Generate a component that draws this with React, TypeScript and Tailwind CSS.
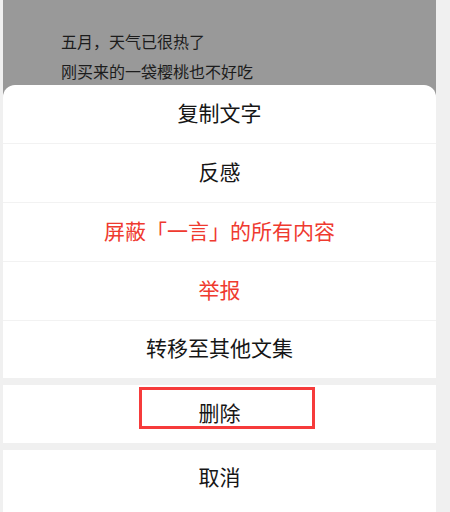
import React from "react";

const font = { fontFamily: '"Noto Sans CJK SC", "Noto Sans", sans-serif' };

function Row({ label, red, divider, h = "h-[58px]" }: { label: string; red?: boolean; divider?: boolean; h?: string }) {
  return (
    <div
      className={`${h} flex items-center justify-center pb-[3px] text-[21px] ${red ? "text-[#ef3a2f]" : "text-[#161616]"} ${divider ? "border-b border-[#f2f2f2]" : ""}`}
    >
      {label}
    </div>
  );
}

export default function App() {
  return (
    <div className="w-[450px] h-[512px] bg-[#f0f0f0] flex overflow-hidden" style={font}>
      <div className="ml-[3px] w-[433px] flex flex-col relative">
        <div className="h-[85px] shrink-0 bg-[#999999] pt-[26px] pl-[58px] overflow-hidden text-[16px] leading-[30px] text-[#1c1c1c]">
          <p>五月，天气已很热了</p>
          <p>刚买来的一袋樱桃也不好吃</p>
        </div>
        <div className="bg-[#999999] flex-1 flex flex-col">
          <div className="bg-white rounded-t-[12px]">
            <Row label="复制文字" divider h="h-[59px]" />
            <Row label="反感" divider h="h-[59px]" />
            <Row label="屏蔽「一言」的所有内容" red divider h="h-[59px]" />
            <Row label="举报" red divider h="h-[59px]" />
            <Row label="转移至其他文集" h="h-[57px]" />
          </div>
          <div className="h-[7px] bg-[#f0f0f0]" />
          <div className="bg-white">
            <Row label="删除" />
          </div>
          <div className="h-[7px] bg-[#f0f0f0]" />
          <div className="bg-white flex-1">
            <Row label="取消" h="h-[57px]" />
          </div>
        </div>
        <div className="absolute left-[136px] top-[387px] w-[176px] h-[42px] border-[3px] border-[#f63b3b]" />
      </div>
    </div>
  );
}
